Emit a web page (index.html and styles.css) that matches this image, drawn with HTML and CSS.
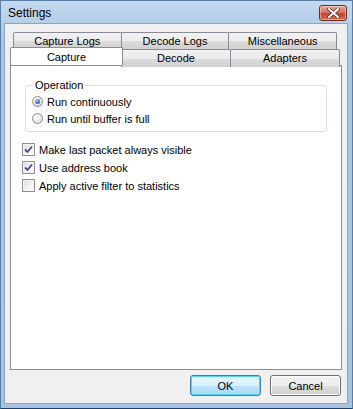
FILE: index.html
```html
<!DOCTYPE html>
<html lang="en">
<head>
  <meta charset="UTF-8">
  <title>Settings</title>
  <link rel="stylesheet" href="styles.css">
</head>
<body>
  <div class="window">
    <div class="titlebar">
      <span class="title">Settings</span>
      <div class="close-btn">
        <svg width="13" height="10" viewBox="0 0 13 10">
          <path d="M2 1 L11 9 M11 1 L2 9" stroke="#5a2a22" stroke-width="3.4" stroke-linecap="square"/>
          <path d="M2 1 L11 9 M11 1 L2 9" stroke="#ffffff" stroke-width="2" stroke-linecap="square"/>
        </svg>
      </div>
    </div>

    <div class="client">
      <div class="tabs">
        <div class="tab-row back">
          <div class="tab">Capture Logs</div>
          <div class="tab">Decode Logs</div>
          <div class="tab">Miscellaneous</div>
        </div>
        <div class="tab-row front">
          <div class="tab selected">Capture</div>
          <div class="tab">Decode</div>
          <div class="tab">Adapters</div>
        </div>
      </div>

      <div class="tab-page">
        <fieldset class="group">
          <legend>Operation</legend>
          <label class="option">
            <span class="radio checked"></span>
            Run continuously
          </label>
          <label class="option">
            <span class="radio"></span>
            Run until buffer is full
          </label>
        </fieldset>

        <div class="checks">
          <label class="option">
            <span class="check checked">
              <svg width="9" height="9" viewBox="0 0 9 9"><path d="M1 4.5 L3.5 7 L8 1.5" fill="none" stroke="#3a4a8c" stroke-width="1.8"/></svg>
            </span>
            Make last packet always visible
          </label>
          <label class="option">
            <span class="check checked">
              <svg width="9" height="9" viewBox="0 0 9 9"><path d="M1 4.5 L3.5 7 L8 1.5" fill="none" stroke="#3a4a8c" stroke-width="1.8"/></svg>
            </span>
            Use address book
          </label>
          <label class="option">
            <span class="check"></span>
            Apply active filter to statistics
          </label>
        </div>
      </div>

      <div class="buttons">
        <div class="btn default">OK</div>
        <div class="btn">Cancel</div>
      </div>
    </div>
  </div>
</body>
</html>
```

FILE: styles.css
```css
body {
  margin: 0;
  font-family: "Liberation Sans", Tahoma, Arial, sans-serif;
  font-size: 11px;
  color: #000;
  background: #fff;
}
.window {
  width: 353px;
  height: 409px;
  box-sizing: border-box;
  display: flex;
  flex-direction: column;
  padding: 0 4px 4px 3px;
  background: linear-gradient(to bottom, #c3d9ef 0, #aac7e5 40px, #a6c4e2 100%);
  border: 1px solid #5a7fa6;
  border-bottom-color: #1e3f66;
}
.titlebar {
  height: 22px;
  display: flex;
  align-items: center;
  justify-content: space-between;
}
.title {
  font-size: 12px;
  padding-left: 4px;
  padding-top: 2px;
}
.close-btn {
  width: 26px;
  height: 14px;
  margin-right: 1px;
  margin-top: 2px;
  display: flex;
  align-items: center;
  justify-content: center;
  border: 1px solid #6b2f28;
  border-radius: 3px;
  background: linear-gradient(to bottom, #e9a99a 0, #d37560 45%, #c1452b 55%, #d0704f 100%);
  box-shadow: inset 0 0 0 1px rgba(255, 220, 210, 0.5);
}
.client {
  flex: 1;
  background: #f0f0f0;
  display: flex;
  flex-direction: column;
  padding: 8px 5px 0 5px;
  border: 1px solid #8ba6c3;
}
.tabs {
  display: flex;
  flex-direction: column;
  position: relative;
  z-index: 1;
  margin-bottom: -2px;
}
.tab-row {
  display: flex;
}
.tab-row.back {
  margin-left: 3px;
  margin-right: 6px;
}
.tab-row.front {
  margin-left: 2px;
  margin-right: 3px;
}
.tab {
  flex: 1;
  height: 16px;
  line-height: 16px;
  text-align: center;
  border: 1px solid #898c95;
  border-bottom: none;
  border-radius: 2px 2px 0 0;
  background: linear-gradient(to bottom, #f2f2f2 0, #ebebeb 50%, #dddddd 51%, #cfcfcf 100%);
  margin-right: -1px;
}
.tab-row.front .tab {
  height: 17px;
}
.tab.selected {
  background: #fff;
  height: 20px;
  line-height: 18px;
  margin-top: -2px;
  margin-left: -2px;
  margin-right: -2px;
  position: relative;
  z-index: 2;
  flex: 0 0 111px;
}
.tab-page {
  flex: 0 0 305px;
  background: #fff;
  border: 1px solid #898c95;
  padding: 13px 14px 0 14px;
  box-sizing: border-box;
}
.group {
  margin: 0;
  padding: 0 0 4px 6px;
  border: 1px solid #d5dfe5;
  border-radius: 3px;
  margin-bottom: 9px;
}
.group legend {
  padding: 0 2px;
  margin-left: 1px;
}
.option {
  display: flex;
  align-items: center;
  height: 17px;
  gap: 4px;
}
.group legend + .option {
  margin-top: 2px;
}
.radio {
  width: 11px;
  height: 11px;
  border-radius: 50%;
  border: 1px solid #8b8b8b;
  background: radial-gradient(circle at 40% 35%, #ffffff 0, #eaeaea 50%, #cfcfcf 100%);
  box-sizing: border-box;
  display: flex;
  align-items: center;
  justify-content: center;
}
.radio.checked::after {
  content: "";
  width: 5px;
  height: 5px;
  border-radius: 50%;
  background: radial-gradient(circle at 40% 35%, #a8d8f8 0, #2c75c3 55%, #1c3f86 100%);
}
.checks {
  display: flex;
  flex-direction: column;
  gap: 1px;
  margin-left: -3px;
}
.check {
  width: 13px;
  height: 13px;
  box-sizing: border-box;
  border: 1px solid #8e8f8f;
  background: linear-gradient(135deg, #dcdcdc 0, #f4f4f4 60%, #ffffff 100%);
  box-shadow: inset 0 0 0 1px #f5f5f5;
  display: flex;
  align-items: center;
  justify-content: center;
}
.buttons {
  display: flex;
  justify-content: flex-end;
  gap: 9px;
  padding-top: 5px;
  padding-right: 1px;
}
.btn {
  width: 71px;
  height: 21px;
  box-sizing: border-box;
  border: 1px solid #707070;
  border-radius: 3px;
  background: linear-gradient(to bottom, #f2f2f2 0, #ebebeb 50%, #dddddd 51%, #cfcfcf 100%);
  box-shadow: inset 0 0 0 1px #fcfcfc;
  display: flex;
  align-items: center;
  justify-content: center;
}
.btn.default {
  border-color: #3c7fb1;
  background: linear-gradient(to bottom, #eaf6fd 0, #d9f0fc 50%, #bee6fd 51%, #a7d9f5 100%);
  box-shadow: inset 0 0 0 1px #48d8fb;
}
```
